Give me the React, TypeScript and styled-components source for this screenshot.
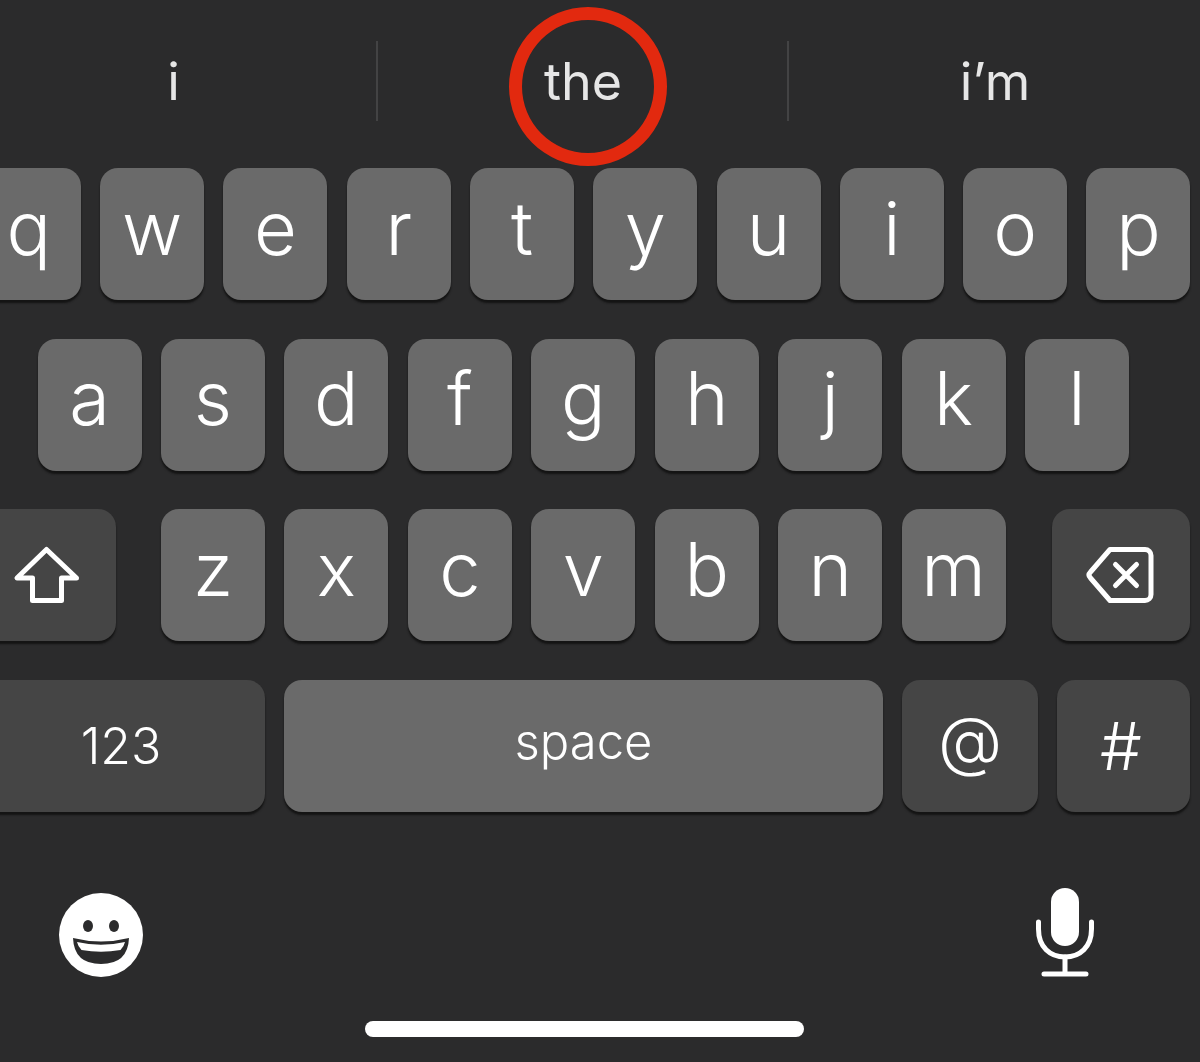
import React from 'react';
import styled, { createGlobalStyle } from 'styled-components';

const GlobalStyle = createGlobalStyle`
  html, body {
    margin: 0;
    padding: 0;
    background: #2b2b2c;
  }
`;

const Screen = styled.div`
  width: 1200px;
  height: 1062px;
  overflow: hidden;
  position: relative;
  background: #2b2b2c;
  font-family: Inter, 'Liberation Sans', sans-serif;
  color: #fff;
`;

const SuggestionBar = styled.div`
  display: grid;
  grid-template-columns: 406px 411px 413px;
  height: 80px;
  margin: 41px 0 47px -30px;
`;

const Suggestion = styled.div<{ $divider?: boolean }>`
  display: flex;
  align-items: center;
  justify-content: center;
  padding-left: 1px;
  font-size: 52px;
  font-weight: 400;
  color: #e6e6e6;
  border-left: ${p => (p.$divider ? '2px solid #434344' : 'none')};
`;

const Highlight = styled.div`
  position: absolute;
  left: 509px;
  top: 7px;
  width: 158px;
  height: 159px;
  box-sizing: border-box;
  border: 13px solid #e2290f;
  border-radius: 50%;
`;

const Keys = styled.div`
  display: flex;
  flex-direction: column;
  gap: 38.6px;
`;

const Row = styled.div<{ $offset: number; $gap?: number }>`
  display: flex;
  gap: ${p => p.$gap ?? 19.45}px;
  margin-left: ${p => p.$offset}px;
`;

const LetterGroup = styled.div`
  display: flex;
  gap: 19.45px;
`;

const Key = styled.div<{ $width?: number; $dark?: boolean }>`
  flex: none;
  width: ${p => p.$width ?? 104}px;
  height: 132px;
  box-sizing: border-box;
  display: flex;
  align-items: center;
  justify-content: center;
  padding-bottom: 13px;
  border-radius: 18px;
  background: ${p => (p.$dark ? '#454545' : '#6a6a6a')};
  box-shadow: 0 3px 2px #141414;
  font-size: 74px;
  font-weight: 300;
`;

const IconKey = styled(Key)`
  padding-bottom: 0;
`;

const DeleteKey = styled(IconKey)`
  margin-left: 1.3px;
`;

const NumberKey = styled(Key)`
  padding-bottom: 0;
  font-size: 50px;
  font-weight: 350;
`;

const SpaceKey = styled(Key)`
  padding-bottom: 8px;
  font-size: 49px;
  font-weight: 350;
`;

const SymbolKey = styled(Key)<{ $nudgeX?: number; $nudgeY?: number }>`
  padding-bottom: ${p => p.$nudgeY ?? 0}px;
  padding-right: ${p => p.$nudgeX ?? 0}px;
  font-size: 66px;
  font-weight: 300;
`;

const BottomRow = styled.div`
  display: flex;
  justify-content: space-between;
  align-items: flex-start;
  margin-top: 76px;
  padding: 5px 105px 0 59px;
  height: 133px;
  box-sizing: border-box;
`;

const MicWrap = styled.div`
  margin-top: -5px;
`;

const HomeBar = styled.div`
  width: 439px;
  height: 16px;
  margin-left: 365px;
  border-radius: 8px;
  background: #fff;
`;

const ShiftIcon = () => (
  <svg width="70" height="60" viewBox="0 0 70 60" fill="none" stroke="#fff" strokeWidth="5" strokeLinejoin="round">
    <path d="M34.5 4.5 L5 33 H20.5 V55.5 H49.5 V33 H64.5 Z" />
  </svg>
);

const DeleteIcon = () => (
  <svg width="72" height="60" viewBox="0 0 72 60" fill="none" stroke="#fff" strokeWidth="5" strokeLinecap="round" strokeLinejoin="round">
    <path d="M25 4.5 H60 a6 6 0 0 1 6 6 V49.5 a6 6 0 0 1 -6 6 H25 L5.5 33 Q2.5 30 5.5 27 Z" />
    <path d="M30.5 19.5 L51.5 40.5 M51.5 19.5 L30.5 40.5" />
  </svg>
);

const EmojiIcon = () => (
  <svg width="84" height="84" viewBox="0 0 84 84">
    <circle cx="42" cy="42" r="42" fill="#fff" />
    <ellipse cx="29" cy="33" rx="5" ry="6" fill="#2b2b2c" />
    <ellipse cx="55" cy="33" rx="5" ry="6" fill="#2b2b2c" />
    <path d="M14 45 Q42 52 70 45 Q69 71 42 71 Q15 71 14 45 Z" fill="#2b2b2c" />
    <path d="M18 49 Q42 54.5 66 49 Q65 53.5 61.5 57 Q42 60.5 22.5 57 Q19 53.5 18 49 Z" fill="#fff" />
  </svg>
);

const MicIcon = () => (
  <svg width="60" height="90" viewBox="0 0 60 90" fill="none" stroke="#fff" strokeWidth="5" strokeLinecap="round">
    <rect x="16" y="0" width="28" height="58" rx="14" fill="#fff" stroke="none" />
    <path d="M3.5 34 V41 C3.5 59 15 69 30 69 C45 69 56.5 59 56.5 41 V34" />
    <path d="M30 69 V86 M9 86 H51" />
  </svg>
);

const topRow = ['q', 'w', 'e', 'r', 't', 'y', 'u', 'i', 'o', 'p'];
const middleRow = ['a', 's', 'd', 'f', 'g', 'h', 'j', 'k', 'l'];
const lowerRow = ['z', 'x', 'c', 'v', 'b', 'n', 'm'];

export default function App() {
  return (
    <Screen>
      <GlobalStyle />
      <SuggestionBar>
        <Suggestion>i</Suggestion>
        <Suggestion $divider>the</Suggestion>
        <Suggestion $divider>i’m</Suggestion>
      </SuggestionBar>
      <Highlight />
      <Keys>
        <Row $offset={-23.2} $gap={19.3}>
          {topRow.map(l => (
            <Key key={l}>{l}</Key>
          ))}
        </Row>
        <Row $offset={37.5}>
          {middleRow.map(l => (
            <Key key={l}>{l}</Key>
          ))}
        </Row>
        <Row $offset={-23} $gap={45}>
          <IconKey $width={139} $dark>
            <ShiftIcon />
          </IconKey>
          <LetterGroup>
            {lowerRow.map(l => (
              <Key key={l}>{l}</Key>
            ))}
          </LetterGroup>
          <DeleteKey $width={138} $dark>
            <DeleteIcon />
          </DeleteKey>
        </Row>
        <Row $offset={-23} $gap={19}>
          <NumberKey $width={288} $dark>123</NumberKey>
          <SpaceKey $width={599}>space</SpaceKey>
          <SymbolKey $width={136} $dark $nudgeY={12}>@</SymbolKey>
          <SymbolKey $width={133} $dark $nudgeX={5}>#</SymbolKey>
        </Row>
      </Keys>
      <BottomRow>
        <EmojiIcon />
        <MicWrap>
          <MicIcon />
        </MicWrap>
      </BottomRow>
      <HomeBar />
    </Screen>
  );
}
